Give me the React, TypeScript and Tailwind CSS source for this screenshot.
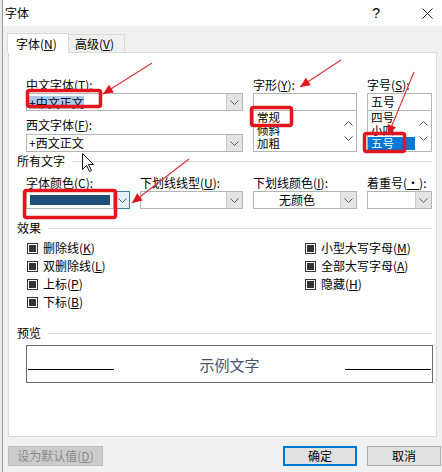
import React from 'react';

const Chevron = ({ up = false }: { up?: boolean }) => (
  <svg width="9" height="5" viewBox="0 0 9 5" className="block">
    <path
      d={up ? 'M0.5 4.5L4.5 0.5L8.5 4.5' : 'M0.5 0.5L4.5 4.5L8.5 0.5'}
      fill="none"
      stroke="#5a5a5a"
      strokeWidth="1"
    />
  </svg>
);

const Combo = ({ children, center }: { children?: React.ReactNode; center?: boolean }) => (
  <div className="flex h-[18px] border border-[#b4b4b4] bg-white">
    <div
      className={`flex-1 flex items-center px-[2px] overflow-hidden whitespace-nowrap ${center ? 'justify-center' : ''}`}
    >
      {children}
    </div>
    <div className="w-[16px] flex items-center justify-center bg-[#e4e4e4] border-l border-[#cacaca]">
      <Chevron />
    </div>
  </div>
);

const Input = ({ children }: { children?: React.ReactNode }) => (
  <div className="h-[18px] border border-[#b4b4b4] bg-white flex items-center px-[3px]">{children}</div>
);

const List = ({ items, selected }: { items: string[]; selected?: number }) => (
  <div className="flex h-[42px] border border-[#b4b4b4] bg-white overflow-hidden">
    <div className="flex-1 text-[11.5px] leading-[13px]">
      {items.map((it, i) => (
        <div key={it} className={`h-[13px] pl-[3px] ${i === selected ? 'bg-[#0078d7] text-white' : ''}`}>
          {it}
        </div>
      ))}
    </div>
    <div className="w-[16px] flex flex-col items-center justify-between py-[10px]">
      <Chevron up />
      <Chevron />
    </div>
  </div>
);

const Heading = ({ label }: { label: string }) => (
  <div className="flex items-center h-[14px] pl-[8px] pr-[4px]">
    <span>{label}</span>
    <div className="flex-1 h-px bg-[#dcdcdc] ml-[7px]" />
  </div>
);

const Check = ({ children }: { children: React.ReactNode }) => (
  <div className="flex items-center h-[18px]">
    <div className="w-[11px] h-[11px] border border-[#333] flex items-center justify-center bg-white">
      <div className="w-[7px] h-[7px] bg-[#333]" />
    </div>
    <span className="ml-[5px]">{children}</span>
  </div>
);

const arrowHead = (x1: number, y1: number, x2: number, y2: number, len = 10, w = 4.5) => {
  const dx = x2 - x1;
  const dy = y2 - y1;
  const L = Math.hypot(dx, dy);
  const ux = dx / L;
  const uy = dy / L;
  const bx = x2 - ux * len;
  const by = y2 - uy * len;
  return `${x2},${y2} ${bx - uy * w},${by + ux * w} ${bx + uy * w},${by - ux * w}`;
};

const arrows = [
  [152, 63, 103, 94],
  [341, 60, 300, 87],
  [414, 72, 388, 135],
  [189, 159, 132, 203],
];

export default function App() {
  return (
    <div className="relative w-[442px] h-[472px] overflow-hidden flex bg-[#f0f0f0] text-[12px] leading-[14px] text-black font-['Noto_Sans_CJK_SC',sans-serif]">
      <div className="w-[2px] bg-[#e9e9e9]" />
      <div className="flex-1 flex flex-col border-l border-[#9c9c9c]">
        {/* title bar */}
        <div className="h-[26px] bg-white flex items-center pl-[2px]">
          <span>字体</span>
          <span className="ml-auto mr-[42px] text-[14px] font-['Liberation_Sans',sans-serif]">?</span>
          <svg width="11" height="11" viewBox="0 0 11 11" className="mr-[9px]">
            <path d="M0.5 0.5L10.5 10.5M10.5 0.5L0.5 10.5" stroke="#222" strokeWidth="1" />
          </svg>
        </div>

        {/* tabs */}
        <div className="h-[27px] flex items-end pl-[4px]">
          <div className="relative z-10 h-[20px] w-[62px] bg-white border border-b-0 border-[#d9d9d9] pl-[8px] pt-[3px]">
            字体(<u>N</u>)
          </div>
          <div className="h-[18px] w-[57px] -ml-px mb-px bg-[#f0f0f0] border border-b-0 border-[#d9d9d9] pl-[6px] pt-[2px]">
            高级(<u>V</u>)
          </div>
        </div>

        {/* panel */}
        <div className="-mt-px ml-[5px] w-[429px] h-[385px] bg-white border border-[#d9d9d9] flex flex-col">
          <div className="mt-[25px] pl-[17px] grid grid-cols-[217px_104px_65px] gap-x-[10px]">
            <div className="flex flex-col">
              <span>中文字体(<u>T</u>):</span>
              <div className="mt-px">
                <Combo>
                  <span className="bg-[#a9cbec] leading-[13px]">+中文正文</span>
                </Combo>
              </div>
              <span className="mt-[7px]">西文字体(<u>F</u>):</span>
              <div className="mt-[2px]">
                <Combo>+西文正文</Combo>
              </div>
            </div>
            <div className="flex flex-col">
              <span>字形(<u>Y</u>):</span>
              <div className="mt-px">
                <Input />
              </div>
              <div className="-mt-px">
                <List items={['常规', '倾斜', '加粗']} />
              </div>
            </div>
            <div className="flex flex-col">
              <span>字号(<u>S</u>):</span>
              <div className="mt-px">
                <Input>五号</Input>
              </div>
              <div className="-mt-px">
                <List items={['四号', '小四', '五号']} selected={2} />
              </div>
            </div>
          </div>

          <div className="mt-[2px]">
            <Heading label="所有文字" />
          </div>

          <div className="mt-[8px] pl-[17px] grid grid-cols-[104px_103px_104px_65px] gap-x-[10px]">
            <div className="flex flex-col">
              <span>字体颜色(<u>C</u>):</span>
              <div className="mt-px flex h-[18px]">
                <div className="flex-1 border border-[#b4b4b4] p-[3px]">
                  <div className="h-full bg-[#1f4e79]" />
                </div>
                <div className="w-[16px] flex items-center justify-center bg-[#e5f1fb] border border-[#3c7fb1]">
                  <Chevron />
                </div>
              </div>
            </div>
            <div className="flex flex-col">
              <span className="whitespace-nowrap">下划线线型(<u>U</u>):</span>
              <div className="mt-px">
                <Combo />
              </div>
            </div>
            <div className="flex flex-col">
              <span className="whitespace-nowrap">下划线颜色(<u>I</u>):</span>
              <div className="mt-px">
                <Combo center>无颜色</Combo>
              </div>
            </div>
            <div className="flex flex-col">
              <span className="whitespace-nowrap">着重号(<u>·</u>):</span>
              <div className="mt-px">
                <Combo />
              </div>
            </div>
          </div>

          <div className="mt-[12px]">
            <Heading label="效果" />
          </div>

          <div className="mt-[4px] pl-[18px] grid grid-cols-[278px_auto]">
            <div className="flex flex-col">
              <Check>删除线(<u>K</u>)</Check>
              <Check>双删除线(<u>L</u>)</Check>
              <Check>上标(<u>P</u>)</Check>
              <Check>下标(<u>B</u>)</Check>
            </div>
            <div className="flex flex-col">
              <Check>小型大写字母(<u>M</u>)</Check>
              <Check>全部大写字母(<u>A</u>)</Check>
              <Check>隐藏(<u>H</u>)</Check>
            </div>
          </div>

          <div className="mt-[15px]">
            <Heading label="预览" />
          </div>

          <div className="mt-[5px] ml-[17px] mr-[3px] h-[38px] border border-[#6b6b6b] flex items-start px-px">
            <div className="w-[86px] h-px bg-black mt-[23px]" />
            <div className="flex-1 text-center text-[15px] leading-[18px] mt-[10px] text-[#44546a]">示例文字</div>
            <div className="w-[86px] h-px bg-black mt-[23px]" />
          </div>
        </div>

        {/* buttons */}
        <div className="mt-[9px] flex pl-[5px] pr-px">
          <div className="w-[95px] h-[20px] bg-[#cccccc] border border-[#bfbfbf] text-[#8a8a8a] flex items-center justify-center">
            设为默认值(<u>D</u>)
          </div>
          <div className="ml-auto w-[74px] h-[20px] bg-[#e1e1e1] border-2 border-[#0078d7] flex items-center justify-center">
            确定
          </div>
          <div className="ml-[10px] w-[74px] h-[20px] bg-[#e1e1e1] border border-[#adadad] flex items-center justify-center">
            取消
          </div>
        </div>
      </div>

      {/* annotations drawn over the screenshot */}
      <svg className="absolute inset-0 pointer-events-none" width="442" height="472" viewBox="0 0 442 472">
        <rect x="27.5" y="90.5" width="73" height="16" rx="2" fill="none" stroke="#e3141c" strokeWidth="3.5" />
        <rect x="251.5" y="107.5" width="40" height="18" rx="2" fill="none" stroke="#e3141c" strokeWidth="3.5" />
        <rect x="364.5" y="133.5" width="40" height="18" rx="2" fill="none" stroke="#e3141c" strokeWidth="3.5" />
        <rect x="24.5" y="190.5" width="91" height="27" rx="2" fill="none" stroke="#e3141c" strokeWidth="3.5" />
        {arrows.map(([x1, y1, x2, y2], i) => (
          <g key={i}>
            <line x1={x1} y1={y1} x2={x2} y2={y2} stroke="#d9363e" strokeWidth="1.2" />
            <polygon points={arrowHead(x1, y1, x2, y2)} fill="#e3141c" />
          </g>
        ))}
        <path
          d="M82.5 153.5L82.5 169.5L86.5 165.5L89.5 171.5L91.5 170.5L88.5 164.5L93.5 164.5Z"
          fill="#fff"
          stroke="#111"
          strokeWidth="1"
        />
      </svg>
    </div>
  );
}
